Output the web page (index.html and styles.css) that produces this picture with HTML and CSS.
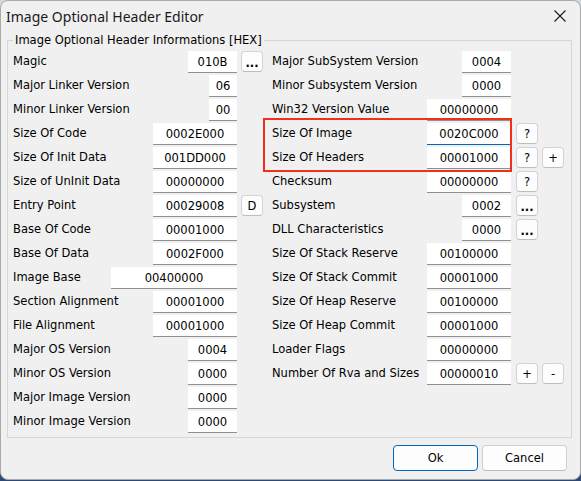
FILE: index.html
```html
<!DOCTYPE html>
<html>
<head>
<meta charset="utf-8">
<link rel="stylesheet" href="styles.css">
</head>
<body>
<div class="window">
  <div class="titlebar">
    <span class="title">Image Optional Header Editor</span>
    <svg class="close" width="12" height="12" viewBox="0 0 12 12"><path d="M0.5 0.5 L11.5 11.5 M11.5 0.5 L0.5 11.5" stroke="#1b1b1b" stroke-width="1.1" fill="none"/></svg>
  </div>
  <fieldset class="group">
    <legend>Image Optional Header Informations [HEX]</legend>
    <div class="cols">
      <div class="col col-left">
        <div class="row"><span class="lbl">Magic</span><span class="val w49">010B</span><span class="slot"><span class="btn dots">...</span></span></div>
        <div class="row"><span class="lbl">Major Linker Version</span><span class="val w28">06</span><span class="slot"></span></div>
        <div class="row"><span class="lbl">Minor Linker Version</span><span class="val w28">00</span><span class="slot"></span></div>
        <div class="row"><span class="lbl">Size Of Code</span><span class="val w84">0002E000</span><span class="slot"></span></div>
        <div class="row"><span class="lbl">Size Of Init Data</span><span class="val w84">001DD000</span><span class="slot"></span></div>
        <div class="row"><span class="lbl">Size of UnInit Data</span><span class="val w84">00000000</span><span class="slot"></span></div>
        <div class="row"><span class="lbl">Entry Point</span><span class="val w84">00029008</span><span class="slot"><span class="btn">D</span></span></div>
        <div class="row"><span class="lbl">Base Of Code</span><span class="val w84">00001000</span><span class="slot"></span></div>
        <div class="row"><span class="lbl">Base Of Data</span><span class="val w84">0002F000</span><span class="slot"></span></div>
        <div class="row"><span class="lbl">Image Base</span><span class="val w126">00400000</span><span class="slot"></span></div>
        <div class="row"><span class="lbl">Section Alignment</span><span class="val w84">00001000</span><span class="slot"></span></div>
        <div class="row"><span class="lbl">File Alignment</span><span class="val w84">00001000</span><span class="slot"></span></div>
        <div class="row"><span class="lbl">Major OS Version</span><span class="val w49">0004</span><span class="slot"></span></div>
        <div class="row"><span class="lbl">Minor OS Version</span><span class="val w49">0000</span><span class="slot"></span></div>
        <div class="row"><span class="lbl">Major Image Version</span><span class="val w49">0000</span><span class="slot"></span></div>
        <div class="row"><span class="lbl">Minor Image Version</span><span class="val w49">0000</span><span class="slot"></span></div>
      </div>
      <div class="col col-right">
        <div class="row"><span class="lbl">Major SubSystem Version</span><span class="val w49">0004</span><span class="slot"></span></div>
        <div class="row"><span class="lbl">Minor Subsystem Version</span><span class="val w49">0000</span><span class="slot"></span></div>
        <div class="row"><span class="lbl">Win32 Version Value</span><span class="val w84">00000000</span><span class="slot"></span></div>
        <div class="row"><span class="lbl">Size Of Image</span><span class="val w84 focused">0020C000</span><span class="slot"><span class="btn">?</span></span></div>
        <div class="row"><span class="lbl">Size Of Headers</span><span class="val w84">00001000</span><span class="slot"><span class="btn">?</span><span class="btn">+</span></span></div>
        <div class="row"><span class="lbl">Checksum</span><span class="val w84">00000000</span><span class="slot"><span class="btn">?</span></span></div>
        <div class="row"><span class="lbl">Subsystem</span><span class="val w49">0002</span><span class="slot"><span class="btn dots">...</span></span></div>
        <div class="row"><span class="lbl">DLL Characteristics</span><span class="val w49">0000</span><span class="slot"><span class="btn dots">...</span></span></div>
        <div class="row"><span class="lbl">Size Of Stack Reserve</span><span class="val w84">00100000</span><span class="slot"></span></div>
        <div class="row"><span class="lbl">Size Of Stack Commit</span><span class="val w84">00001000</span><span class="slot"></span></div>
        <div class="row"><span class="lbl">Size Of Heap Reserve</span><span class="val w84">00100000</span><span class="slot"></span></div>
        <div class="row"><span class="lbl">Size Of Heap Commit</span><span class="val w84">00001000</span><span class="slot"></span></div>
        <div class="row"><span class="lbl">Loader Flags</span><span class="val w84">00000000</span><span class="slot"></span></div>
        <div class="row"><span class="lbl">Number Of Rva and Sizes</span><span class="val w84">00000010</span><span class="slot"><span class="btn">+</span><span class="btn">-</span></span></div>
      </div>
    </div>
  </fieldset>
  <div class="footer">
    <span class="pbtn default">Ok</span>
    <span class="pbtn">Cancel</span>
  </div>
  <div class="highlight"></div>
</div>
</body>
</html>
```

FILE: styles.css
```css
html, body {
  margin: 0;
  width: 581px;
  height: 481px;
  overflow: hidden;
}
body {
  background: linear-gradient(to bottom, #d4d8de 0%, #9aa8ba 60%, #2c4a78 100%);
}
.window {
  box-sizing: border-box;
  width: 581px;
  height: 480px;
  background: #f0f0f0;
  border: 1px solid #a9a9a9;
  border-radius: 8px;
  position: relative;
  display: flex;
  flex-direction: column;
  font-family: "DejaVu Sans Condensed", "DejaVu Sans", sans-serif;
  font-stretch: condensed;
  font-size: 12.8px;
  color: #000;
}
.titlebar {
  height: 31px;
  display: flex;
  align-items: center;
  justify-content: space-between;
  padding: 0 14px 0 5px;
}
.title {
  font-family: "Noto Sans", "Open Sans", sans-serif;
  font-size: 14px;
  color: #1a1a1a;
  margin-top: -1px;
}
.close {
  display: block;
  margin-top: -1px;
}
.group {
  margin: 0 8px 0 6px;
  padding: 2px 7px 3px 5px;
  border: 1px solid #d6d6d6;
  min-width: 0;
}
.group legend {
  padding: 0 2px;
  line-height: 16px;
  font-size: 12.8px;
}
.cols {
  display: grid;
  grid-template-columns: 250px 292px;
  column-gap: 9px;
  align-items: start;
}
.col {
  display: flex;
  flex-direction: column;
}
.row {
  height: 24px;
  display: flex;
  align-items: flex-start;
}
.lbl {
  flex: 1;
  line-height: 22px;
  white-space: nowrap;
}
.val {
  box-sizing: border-box;
  margin-top: 1px;
  height: 22px;
  background: #fff;
  border-bottom: 1px solid #8f8f8f;
  text-align: center;
  line-height: 22px;
  white-space: nowrap;
}
.val.focused {
  border-bottom-color: #0067c0;
}
.w28 { width: 28px; }
.w49 { width: 49px; }
.w84 { width: 84px; }
.w126 { width: 126px; }
.slot {
  display: flex;
  gap: 4px;
}
.col-left .slot {
  width: 26px;
  padding-left: 4px;
  box-sizing: border-box;
}
.col-right .slot {
  width: 53px;
  padding-left: 5px;
  box-sizing: border-box;
}
.btn {
  box-sizing: border-box;
  margin-top: 1px;
  width: 22px;
  height: 21px;
  background: #fdfdfd;
  border: 1px solid #d3d3d3;
  border-bottom-color: #bdbdbd;
  border-radius: 4px;
  text-align: center;
  line-height: 19px;
}
.btn.dots {
  font-weight: bold;
  line-height: 22px;
}
.footer {
  display: flex;
  justify-content: flex-end;
  gap: 4px;
  margin-top: 7px;
  padding-right: 13px;
}
.pbtn {
  box-sizing: border-box;
  width: 85px;
  height: 26px;
  background: #fdfdfd;
  border: 1px solid #d0d0d0;
  border-bottom-color: #bababa;
  border-radius: 4px;
  text-align: center;
  line-height: 24px;
}
.pbtn.default {
  border-color: #0067c0;
}
.highlight {
  position: absolute;
  box-sizing: border-box;
  left: 262px;
  top: 117px;
  width: 249px;
  height: 54px;
  border: 2px solid #f0301a;
}
```
